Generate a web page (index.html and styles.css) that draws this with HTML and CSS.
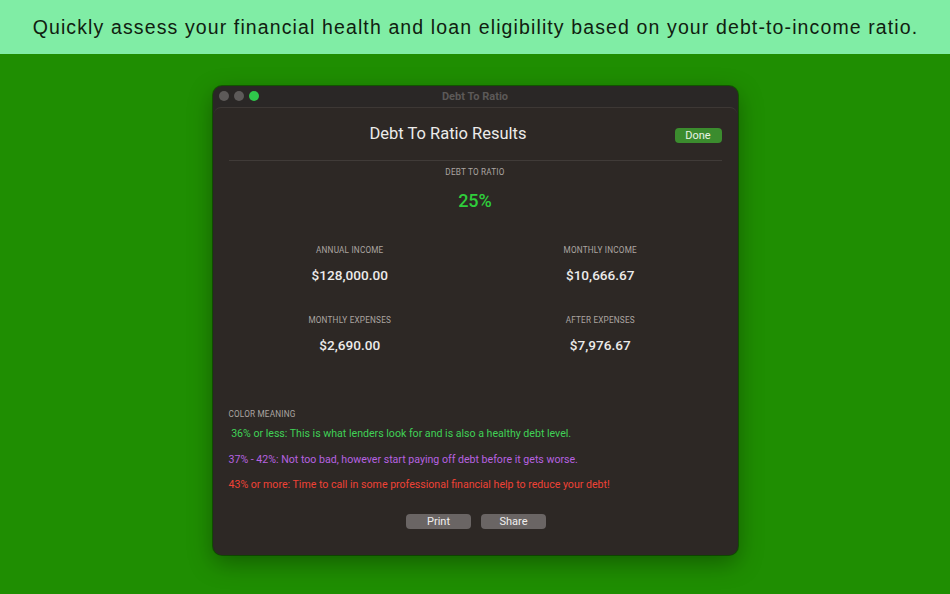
FILE: index.html
```html
<!DOCTYPE html>
<html>
<head>
<meta charset="utf-8">
<link rel="stylesheet" href="styles.css">
</head>
<body>
<header class="banner">Quickly assess your financial health and loan eligibility based on your debt-to-income ratio.</header>
<main class="stage">
  <div class="window">
    <div class="titlebar">
      <div class="lights">
        <span class="light grey"></span>
        <span class="light grey"></span>
        <span class="light green"></span>
      </div>
      <div class="wtitle">Debt To Ratio</div>
    </div>
    <div class="sheet">
      <div class="head">
        <h1 class="htitle">Debt To Ratio Results</h1>
        <button class="done">Done</button>
      </div>
      <div class="sep"></div>
      <div class="ratio">
        <div class="label">DEBT TO RATIO</div>
        <div class="big">25%</div>
      </div>
      <div class="grid">
        <div class="cell"><div class="label">ANNUAL INCOME</div><div class="value">$128,000.00</div></div>
        <div class="cell"><div class="label">MONTHLY INCOME</div><div class="value">$10,666.67</div></div>
        <div class="cell"><div class="label">MONTHLY EXPENSES</div><div class="value">$2,690.00</div></div>
        <div class="cell"><div class="label">AFTER EXPENSES</div><div class="value">$7,976.67</div></div>
      </div>
      <div class="legend">
        <div class="label">COLOR MEANING</div>
        <p class="line good">&nbsp;36% or less: This is what lenders look for and is also a healthy debt level.</p>
        <p class="line mid">37% - 42%: Not too bad, however start paying off debt before it gets worse.</p>
        <p class="line bad">43% or more: Time to call in some professional financial help to reduce your debt!</p>
      </div>
      <div class="actions">
        <button class="btn">Print</button>
        <button class="btn">Share</button>
      </div>
    </div>
  </div>
</main>
</body>
</html>
```
FILE: styles.css
```css
* { box-sizing: border-box; }
html, body { margin: 0; padding: 0; }
body {
  width: 950px;
  height: 594px;
  overflow: hidden;
  background: #1f8e02;
  font-family: Roboto, "Liberation Sans", sans-serif;
}
.banner {
  height: 54px;
  background: #80eda5;
  color: #102010;
  font-family: "Liberation Sans", Arial, sans-serif;
  font-size: 19.5px;
  letter-spacing: 1.12px;
  display: flex;
  align-items: center;
  justify-content: center;
  padding-top: 0;
  padding-left: 1px;
}
.stage {
  display: flex;
  justify-content: center;
  padding-top: 32px;
}
.window {
  width: 525px;
  height: 469px;
  background: #2a2726;
  border-radius: 9px;
  box-shadow: 0 8px 24px rgba(0,0,0,0.35), 0 0 0 1px rgba(0,0,0,0.35);
  display: flex;
  flex-direction: column;
  overflow: hidden;
}
.titlebar {
  height: 21px;
  flex: none;
  display: flex;
  align-items: center;
  position: relative;
  padding-left: 6px;
  padding-bottom: 1px;
}
.lights { display: flex; gap: 5px; }
.light { width: 10px; height: 10px; border-radius: 50%; display: block; }
.light.grey { background: #5d5a59; }
.light.green { background: #2fc84b; }
.wtitle {
  position: absolute;
  left: 0; right: 0; top: 0; bottom: 0;
  display: flex; align-items: center; justify-content: center;
  font-size: 11px;
  font-weight: 700;
  color: #5c5958;
}
.sheet {
  flex: 1;
  margin: 0 1px 0 1px;
  background: #2d2825;
  border-top: 1px solid #3d3835;
  border-radius: 7px 7px 8px 8px;
  padding: 0 15px;
  display: flex;
  flex-direction: column;
}
.head {
  height: 52px;
  display: flex;
  align-items: center;
  justify-content: center;
  position: relative;
}
.htitle {
  margin: 0;
  font-size: 16.5px;
  font-weight: 400;
  color: #ecebea;
  margin-left: -54px;
  margin-top: -2px;
}
.done {
  position: absolute;
  right: 0;
  top: 20px;
  width: 47px;
  height: 15px;
  border: none;
  border-radius: 4px;
  background: #3b8c2e;
  color: #e8f2e4;
  font-family: inherit;
  font-size: 11px;
  padding: 0;
  line-height: 15px;
}
.sep { height: 1px; background: #403b38; flex: none; }
.label {
  font-size: 8.2px;
  color: #aba5a1;
  letter-spacing: 0.2px;
  line-height: 12px;
}
.ratio {
  display: flex;
  flex-direction: column;
  align-items: center;
  padding-top: 5px;
}
.big {
  font-size: 18px;
  color: #2fcd3b;
  margin-top: 13px;
  line-height: 20px;
  font-weight: 500;
}
.grid {
  display: grid;
  grid-template-columns: 1fr 1fr;
  row-gap: 31px;
  margin-top: 33px;
}
.cell {
  display: flex;
  flex-direction: column;
  align-items: center;
}
.cell:nth-child(odd) { margin-left: -4px; }
.cell:nth-child(even) { margin-left: 4px; }
.value {
  font-size: 13.6px;
  font-weight: 500;
  color: #ecebea;
  margin-top: 11px;
  line-height: 16px;
}
.legend { margin-top: 55px; }
.legend .label { margin-bottom: 7px; }
.line {
  margin: 0 0 11.6px 0;
  font-size: 10.6px;
  line-height: 14px;
}
.good { color: #40d156; }
.mid { color: #b762e0; }
.bad { color: #ef4236; }
.actions {
  display: flex;
  justify-content: center;
  gap: 10px;
  margin-top: 10px;
  margin-left: 2px;
}
.btn {
  width: 65px;
  height: 15px;
  border: none;
  border-radius: 4px;
  background: #6a6564;
  color: #f1efee;
  font-family: inherit;
  font-size: 11px;
  line-height: 15px;
  padding: 0;
}
```
